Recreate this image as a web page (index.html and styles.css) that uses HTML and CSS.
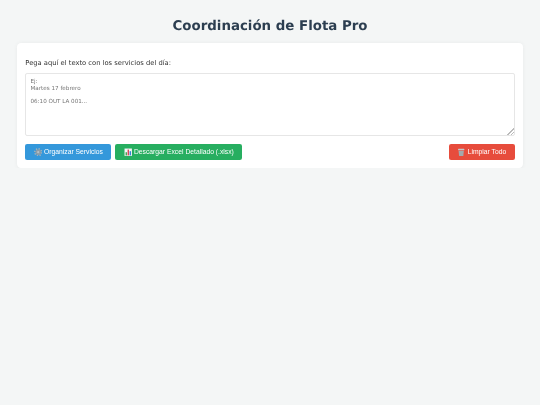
FILE: index.html
```html
<!DOCTYPE html>
<html lang="es">
<head>
    <meta charset="UTF-8">
    <meta name="viewport" content="width=device-width, initial-scale=1.0">
    <title>Coordinación de Flota Pro</title>
    <link rel="stylesheet" href="styles.css">
</head>
<body>
    <div class="page">
        <h1>Coordinación de Flota Pro</h1>

        <div class="card">
            <label for="servicios">Pega aquí el texto con los servicios del día:</label>
            <textarea id="servicios" placeholder="Ej:&#10;Martes 17 febrero&#10;&#10;06:10 OUT LA 001..."></textarea>

            <div class="actions">
                <button class="btn btn-blue">
                    <svg class="icon" viewBox="0 0 16 16">
                        <circle cx="8" cy="8" r="6.4" fill="none" stroke="#a3b0b9" stroke-width="3" stroke-dasharray="2.4 2.6"/>
                        <circle cx="8" cy="8" r="3.6" fill="#b4c0c8" stroke="#8d9ca6" stroke-width="3"/>
                    </svg>
                    Organizar Servicios
                </button>
                <button class="btn btn-green">
                    <svg class="icon" viewBox="0 0 16 16">
                        <rect x="1" y="1" width="14" height="14" fill="#f4f6f8"/>
                        <rect x="3" y="8" width="2.6" height="6" fill="#3fa34d"/>
                        <rect x="6.8" y="3" width="2.6" height="11" fill="#d8434f"/>
                        <rect x="10.6" y="6" width="2.6" height="8" fill="#2f7fd6"/>
                    </svg>
                    Descargar Excel Detallado (.xlsx)
                </button>
                <button class="btn btn-red">
                    <svg class="icon" viewBox="0 0 16 16">
                        <rect x="2" y="1.5" width="12" height="3" rx="1" fill="#c4c8cb"/>
                        <path d="M3 5h10l-1 10H4z" fill="#a3a9ad"/>
                    </svg>
                    Limpiar Todo
                </button>
            </div>
        </div>
    </div>
</body>
</html>
```

FILE: styles.css
```css
body {
    font-family: "DejaVu Sans", sans-serif;
    background-color: #f4f6f6;
    margin: 0;
    color: #333;
    text-rendering: geometricPrecision;
}
/* the page is laid out at 1280px and shrunk to the 540px window */
.page {
    zoom: 0.421875;
    width: 1280px;
    box-sizing: border-box;
    padding: 45px 40px 0;
    transform: translateZ(0);
}
h1 {
    margin: 0 0 20px;
    font-size: 31.7px;
    line-height: 37px;
    text-align: center;
    color: #2c3e50;
}
.card {
    background-color: #fff;
    padding: 37px 20px 20px;
    border-radius: 10px;
    box-shadow: 0 2px 10px rgba(0, 0, 0, 0.05);
}
label {
    display: block;
    font-size: 16px;
    line-height: 19px;
    margin-bottom: 15px;
}
textarea {
    display: block;
    box-sizing: border-box;
    width: 100%;
    height: 150px;
    padding: 10px;
    border: 2px solid #e6e6e6;
    border-radius: 5px;
    font-family: "DejaVu Sans", sans-serif;
    font-size: 13.33px;
    line-height: 16px;
}
textarea::-webkit-resizer {
    background: linear-gradient(135deg, transparent 76%, #bbb 76%, #bbb 81%, transparent 81%, transparent 88%, #bbb 88%, #bbb 93%, transparent 93%);
}
.actions {
    display: flex;
    gap: 9px;
    margin-top: 18px;
}
.btn {
    display: flex;
    align-items: center;
    gap: 4.5px;
    padding: 10px 20px;
    height: 38px;
    border: none;
    border-radius: 5px;
    color: #fff;
    font-family: "Liberation Sans", Arial, sans-serif;
    font-size: 16px;
    white-space: nowrap;
    cursor: pointer;
}
.icon {
    width: 20px;
    height: 20px;
}
.btn-blue {
    background-color: #3498db;
}
.btn-green {
    background-color: #27ae60;
}
.btn-red {
    background-color: #e74c3c;
    margin-left: auto;
}
```
